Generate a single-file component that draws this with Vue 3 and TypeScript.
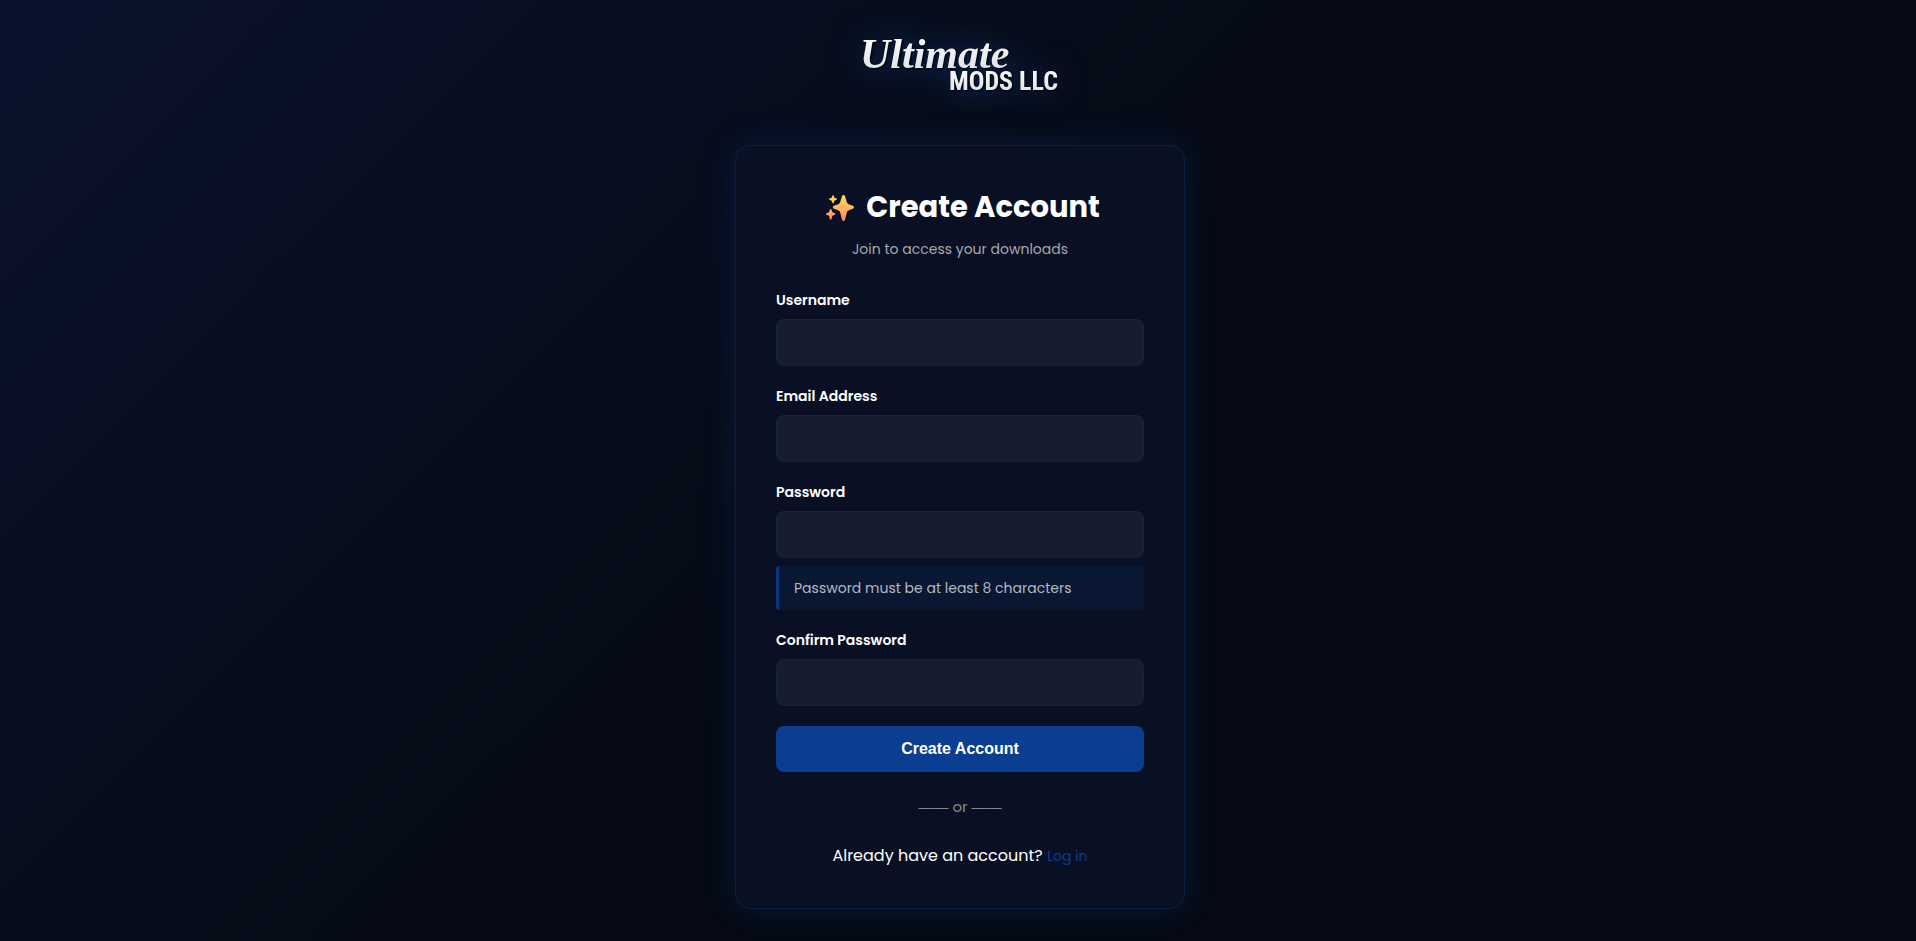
<script setup lang="ts">
import { reactive } from 'vue'

interface Field {
  id: 'username' | 'email' | 'password' | 'confirm'
  label: string
  type: string
  hint?: string
}

const fields: Field[] = [
  { id: 'username', label: 'Username', type: 'text' },
  { id: 'email', label: 'Email Address', type: 'email' },
  { id: 'password', label: 'Password', type: 'password', hint: 'Password must be at least 8 characters' },
  { id: 'confirm', label: 'Confirm Password', type: 'password' },
]

const form = reactive({ username: '', email: '', password: '', confirm: '' })
</script>

<template>
  <div class="page">
    <header class="brand">
      <svg class="logo" viewBox="0 0 200 64" role="img" aria-label="Ultimate Mods LLC">
        <defs>
          <linearGradient id="silver" x1="0" y1="0" x2="0" y2="1">
            <stop offset="0" stop-color="#ffffff" />
            <stop offset="1" stop-color="#d9dde2" />
          </linearGradient>
        </defs>
        <text class="script" x="0" y="36" fill="url(#silver)">Ultimate</text>
        <text class="block" x="89" y="58" fill="url(#silver)">MODS LLC</text>
      </svg>
    </header>

    <main class="card">
      <h1 class="title">
        <svg class="sparkles" viewBox="0 0 28 26" aria-hidden="true">
          <defs>
            <linearGradient id="spark" x1="0" y1="0" x2="0" y2="26" gradientUnits="userSpaceOnUse">
              <stop offset="0.1" stop-color="#ffd05c" />
              <stop offset="0.55" stop-color="#ffb45e" />
              <stop offset="1" stop-color="#ff7e6b" />
            </linearGradient>
          </defs>
          <g fill="url(#spark)">
            <path d="M17.500 0c.9 0 1.300.6 1.600 1.500l1.600 5.200c.5 1.600 1.200 2.300 2.800 2.800l3.300 1.300c.8.300 1.200.8 1.200 1.500s-.4 1.200-1.200 1.500l-3.300 1.300c-1.600.5-2.300 1.200-2.800 2.800l-1.600 6.600c-.3.9-.7 1.500-1.600 1.500s-1.300-.6-1.600-1.500l-1.600-6.600c-.5-1.600-1.200-2.300-2.800-2.800L8 13.800c-.8-.3-1.200-.8-1.200-1.500s.4-1.200 1.200-1.500l3.500-1.300c1.600-.5 2.300-1.200 2.800-2.800l1.600-5.200C16.200.6 16.600 0 17.500 0z" />
            <path d="M7 .2c.5 0 .7.4.8.8l.6 1.700 1.700.6c.5.200.8.4.8.9s-.3.700-.8.900l-1.700.6L7.800 7.600c-.1.400-.3.800-.8.800s-.7-.4-.8-.8l-.6-1.900-1.700-.6c-.5-.2-.8-.4-.8-.9s.3-.7.8-.9l1.700-.6L6.200 1c.1-.4.300-.8.800-.8z" />
            <path d="M4.700 14c.5 0 .8.400.9.900l.8 2.300 2.100.8c.6.200.9.500.9 1s-.3.800-.9 1l-2.100.8-.8 3c-.1.500-.4.900-.9.900s-.8-.4-.9-.9l-.8-3-2.100-.8c-.6-.2-.9-.5-.9-1s.3-.8.900-1l2.100-.8.800-2.300c.1-.5.400-.9.900-.9z" />
          </g>
        </svg>
        <span>Create Account</span>
      </h1>
      <p class="subtitle">Join to access your downloads</p>

      <form @submit.prevent>
        <div v-for="field in fields" :key="field.id" class="field">
          <label :for="field.id">{{ field.label }}</label>
          <input
            :id="field.id"
            v-model="form[field.id]"
            :type="field.type"
            :aria-describedby="field.hint ? `${field.id}-hint` : undefined"
          />
          <p v-if="field.hint" :id="`${field.id}-hint`" class="hint">{{ field.hint }}</p>
        </div>
        <button type="submit">Create Account</button>
      </form>

      <p class="divider"><span class="rule">——</span> or <span class="rule">——</span></p>
      <p class="switch">Already have an account? <a href="#login">Log in</a></p>
    </main>
  </div>
</template>

<style>
body {
  margin: 0;
  background: #050a14;
}
</style>

<style scoped>
.page {
  box-sizing: border-box;
  min-height: 100vh;
  padding: 32px 20px 32px 24px;
  display: flex;
  flex-direction: column;
  align-items: center;
  font-family: Poppins, Inter, sans-serif;
  color: #fff;
  background: linear-gradient(135deg, #0a122c 0%, #050a14 50%, #050a14 100%);
}

.brand {
  margin-bottom: 49px;
}

.logo {
  display: block;
  width: 200px;
  height: 64px;
  overflow: visible;
  filter: drop-shadow(1px 1px 1px #000) drop-shadow(0 0 15px rgba(13, 71, 161, 0.5));
}

.script {
  font: italic 700 42px "Liberation Serif", serif;
}

.block {
  font: 700 26px "Liberation Sans Narrow", "Roboto Condensed", "DejaVu Sans Condensed", sans-serif;
}

.card {
  box-sizing: border-box;
  width: 100%;
  max-width: 450px;
  padding: 40px;
  border: 1px solid rgba(13, 71, 161, 0.25);
  border-radius: 16px;
  background: #091023;
  box-shadow: 0 0 32px rgba(13, 71, 161, 0.25);
  text-align: center;
}

.title {
  display: flex;
  align-items: center;
  justify-content: center;
  gap: 12px;
  margin: 0 0 8px;
  padding-left: 6px;
  font-size: 29px;
  line-height: 43px;
  font-weight: 700;
}

.sparkles {
  width: 28px;
  height: 26px;
}

.subtitle {
  margin: 0 0 29px;
  font-size: 14px;
  line-height: 24px;
  color: #a7a8ac;
}

.field {
  margin-bottom: 20px;
  text-align: left;
}

label {
  display: block;
  margin-bottom: 8px;
  font-size: 14px;
  line-height: 21px;
  font-weight: 600;
}

input {
  display: block;
  box-sizing: border-box;
  width: 100%;
  height: 47px;
  padding: 12px 16px;
  border: 1px solid #132445;
  border-radius: 8px;
  outline: none;
  background: #171d2f;
  color: #fff;
  font: inherit;
}

input:focus {
  border-color: #0d47a1;
}

.hint {
  margin: 8px 0 0;
  padding: 12px 15px;
  border-left: 3px solid #0b3780;
  border-radius: 4px;
  background: #091733;
  font-size: 14px;
  line-height: 20px;
  color: #b6b9c0;
}

button {
  display: block;
  width: 100%;
  height: 46px;
  border: 0;
  border-radius: 8px;
  background: #0b3d91;
  color: #fff;
  font: 700 16px "Liberation Sans", Arial, sans-serif;
  cursor: pointer;
}

.divider {
  margin: 24px 0 26px;
  font-size: 15px;
  line-height: 22px;
  color: #85878f;
}

.rule {
  font-family: "Liberation Sans", Arial, sans-serif;
}

.switch {
  margin: 0;
  font-size: 16px;
  line-height: 24px;
}

.switch a {
  font-size: 14px;
  color: #0b3d91;
  text-decoration: none;
}
</style>
